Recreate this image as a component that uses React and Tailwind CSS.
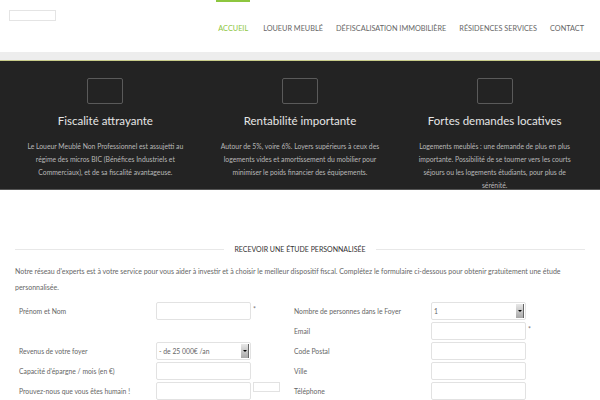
import React from 'react';

const navItems = ['Accueil', 'Loueur meublé', 'Défiscalisation immobilière', 'Résidences services', 'Contact'];

const features = [
    {
        title: 'Fiscalité attrayante',
        text: 'Le Loueur Meublé Non Professionnel est assujetti au régime des micros BIC (Bénéfices Industriels et Commerciaux), et de sa fiscalité avantageuse.',
    },
    {
        title: 'Rentabilité importante',
        text: 'Autour de 5%, voire 6%. Loyers supérieurs à ceux des logements vides et amortissement du mobilier pour minimiser le poids financier des équipements.',
    },
    {
        title: 'Fortes demandes locatives',
        text: 'Logements meublés : une demande de plus en plus importante. Possibilité de se tourner vers les courts séjours ou les logements étudiants, pour plus de sérénité.',
    },
];

const Field = ({ star }) => (
    <div className="flex items-start">
        <div className="w-[95px] h-[18px] border border-[#e2e2e2] rounded-[2px] bg-white" />
        {star && <span className="text-[7px] leading-[10px] text-[#777] ml-[2px] mt-[2px]">*</span>}
    </div>
);

const Select = ({ value }) => (
    <div className="w-[95px] h-[18px] border border-[#e2e2e2] rounded-[2px] bg-white flex items-center justify-between pl-[2px] pr-[1px]">
        <span className="text-[6.8px] text-[#666]">{value}</span>
        <span className="w-[8px] h-[14px] bg-gradient-to-b from-[#e8e8e8] to-[#a8a8a8] border-r border-[#666] flex items-center justify-center">
            <span className="w-0 h-0 border-l-[2px] border-r-[2px] border-t-[2px] border-l-transparent border-r-transparent border-t-black" />
        </span>
    </div>
);

const Row = ({ label, children }) => (
    <div className="flex items-start h-[20px]">
        <span className="text-[6.8px] leading-[10px] text-[#666] pt-[4px] w-[137px] shrink-0">{label}</span>
        {children}
    </div>
);

export default function App() {
    return (
        <div className="w-[600px] h-[400px] overflow-hidden bg-white" style={{ fontFamily: 'Lato, "Open Sans", sans-serif' }}>
            <header className="h-[52px] flex justify-between pl-[9px] pr-[16px]">
                <div className="mt-[10px] w-[47px] h-[11px] border border-[#e4e4e4]" />
                <nav className="flex gap-[13px] text-[7.3px] leading-[12px]">
                    {navItems.map((item, i) => (
                        <div key={item} className={`pt-[21px] border-t-2 ${i === 0 ? 'border-[#8dc63f] text-[#8dc63f] px-[2px]' : 'border-transparent text-[#666]'}`}>
                            <span className="uppercase">{item}</span>
                        </div>
                    ))}
                </nav>
            </header>
            <div className="h-[8px] bg-[#ededed]" />
            <div className="h-[1px] bg-[#c8cc8a]" />
            <section className="bg-[#232323] h-[129px] grid grid-cols-3 px-[8px] pt-[17px] border-b border-[#555]">
                {features.map(f => (
                    <div key={f.title} className="flex flex-col items-center px-[16px] text-center">
                        <div className="w-[36px] h-[26px] border border-[#5a5a5a] rounded-[2px]" />
                        <h3 className="text-[11.5px] leading-[16px] text-[#e6e6e6] mt-[9px]">{f.title}</h3>
                        <p className="text-[6.8px] leading-[13px] text-[#b8b8b8] mt-[11px]">{f.text}</p>
                    </div>
                ))}
            </section>
            <section className="px-[15px] pt-[54px]">
                <div className="flex items-center gap-[10px]">
                    <div className="flex-1 h-px bg-[#e8e8e8]" />
                    <span className="text-[7px] leading-[10px] text-[#333] uppercase">Recevoir une étude personnalisée</span>
                    <div className="flex-1 h-px bg-[#e8e8e8]" />
                </div>
                <p className="text-[7px] leading-[16px] text-[#666] mt-[9px] pr-[15px]">
                    Notre réseau d'experts est à votre service pour vous aider à investir et à choisir le meilleur dispositif fiscal. Complétez le formulaire ci-dessous pour obtenir gratuitement une étude personnalisée.
                </p>
                <div className="grid grid-cols-[275px_1fr] mt-[7px] pl-[4px]">
                    <div>
                        <Row label="Prénom et Nom"><Field star /></Row>
                        <Row label="" />
                        <Row label="Revenus de votre foyer"><Select value="- de 25 000€ /an" /></Row>
                        <Row label="Capacité d'épargne / mois (en €)"><Field /></Row>
                        <Row label="Prouvez-nous que vous êtes humain !">
                            <Field />
                            <div className="w-[27px] h-[10px] border border-[#e2e2e2] ml-[2px]" />
                        </Row>
                    </div>
                    <div>
                        <Row label="Nombre de personnes dans le Foyer"><Select value="1" /></Row>
                        <Row label="Email"><Field star /></Row>
                        <Row label="Code Postal"><Field /></Row>
                        <Row label="Ville"><Field /></Row>
                        <Row label="Téléphone"><Field /></Row>
                    </div>
                </div>
            </section>
        </div>
    );
}
